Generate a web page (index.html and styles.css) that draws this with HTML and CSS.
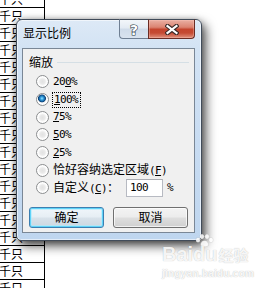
FILE: index.html
```html
<!DOCTYPE html>
<html lang="zh-CN">
<head>
<meta charset="utf-8">
<title>显示比例</title>
<link rel="stylesheet" href="styles.css">
</head>
<body>
<div class="sheet">
  <div class="cell">千只</div><div class="cell">千只</div><div class="cell">千只</div>
  <div class="cell">千只</div><div class="cell">千只</div><div class="cell">千只</div>
  <div class="cell">千只</div><div class="cell">千只</div><div class="cell">千只</div>
  <div class="cell">千只</div><div class="cell">千只</div><div class="cell">千只</div>
  <div class="cell">千只</div><div class="cell">千只</div><div class="cell">千只</div>
  <div class="cell">千只</div><div class="cell">千只</div><div class="cell">千只</div>
</div>

<div class="window">
  <div class="titlebar">
    <span class="title">显示比例</span>
    <div class="caption-buttons">
      <div class="cap help"><span class="help-glyph">?</span></div>
      <div class="cap close">
        <svg width="14" height="11" viewBox="0 0 14 11">
          <path d="M2.5 2 L11.5 9 M11.5 2 L2.5 9" stroke="#3b2a28" stroke-width="4.4" stroke-linecap="square" fill="none"/>
          <path d="M2.5 2 L11.5 9 M11.5 2 L2.5 9" stroke="#ffffff" stroke-width="2.2" stroke-linecap="square" fill="none"/>
        </svg>
      </div>
    </div>
  </div>
  <div class="client">
    <div class="group-head"><span>缩放</span><div class="rule"></div></div>
    <div class="options">
      <div class="opt"><span class="radio"></span><span class="lbl lat">20<u>0</u>%</span></div>
      <div class="opt"><span class="radio checked"></span><span class="lbl lat focus"><u>1</u>00%</span></div>
      <div class="opt"><span class="radio"></span><span class="lbl lat"><u>7</u>5%</span></div>
      <div class="opt"><span class="radio"></span><span class="lbl lat"><u>5</u>0%</span></div>
      <div class="opt"><span class="radio"></span><span class="lbl lat"><u>2</u>5%</span></div>
      <div class="opt"><span class="radio"></span><span class="lbl">恰好容纳选定区域<span class="lat">(<u>F</u>)</span></span></div>
      <div class="opt"><span class="radio"></span><span class="lbl custom">自定义<span class="lat">(<u>C</u>)</span>：</span><span class="field lat">100</span><span class="pct lat">%</span></div>
    </div>
    <div class="buttons">
      <div class="btn default">确定</div>
      <div class="btn">取消</div>
    </div>
  </div>
</div>

<div class="watermark">
  <svg class="paw" width="19" height="13" viewBox="0 0 19 13">
    <ellipse cx="3" cy="6" rx="2.2" ry="2.6"/>
    <ellipse cx="7" cy="2.6" rx="2.2" ry="2.5"/>
    <ellipse cx="12" cy="2.6" rx="2.2" ry="2.5"/>
    <ellipse cx="16" cy="6" rx="2.2" ry="2.6"/>
    <path d="M9.5 6.5 C6 6.5 4.5 11 6.5 12.2 C8 13 11 13 12.5 12.2 C14.5 11 13 6.5 9.5 6.5 Z"/>
  </svg>
  <div class="wm-line"><span class="wm-baidu">Baidu</span><span class="wm-jy">经验</span></div>
  <div class="wm-url">jingyan.baidu.com</div>
</div>
</body>
</html>
```

FILE: styles.css
```css
html, body {
  margin: 0;
  padding: 0;
}

body {
  width: 279px;
  height: 288px;
  overflow: hidden;
  position: relative;
  background: #ffffff;
  font-family: "Noto Sans CJK SC", sans-serif;
  font-size: 12px;
  color: #000;
}

/* background spreadsheet column */
.sheet {
  width: 44px;
  height: 300px;
  margin-top: -9px;
  border-right: 1px solid #000;
}

.cell {
  height: 16px;
  line-height: 16px;
  border-bottom: 1px solid #000;
  white-space: nowrap;
  overflow: hidden;
  text-indent: -1px;
}

/* dialog window */
.window {
  position: absolute;
  left: 16px;
  top: 19px;
  width: 186px;
  height: 222px;
  box-sizing: border-box;
  border: 1px solid #414c5a;
  border-radius: 6px 6px 5px 5px;
  padding: 0 6px 7px 5px;
  display: flex;
  flex-direction: column;
  background: linear-gradient(180deg, #dde9f6 0, #d3e3f4 28px, #c8dcf2 55%, #bfd6ef 100%);
  box-shadow: inset 0 0 0 1px rgba(255, 255, 255, 0.55), 4px 5px 11px rgba(0, 0, 0, 0.65), -1px 1px 6px rgba(0, 0, 0, 0.35);
}

.titlebar {
  height: 29px;
  margin-top: -1px;
  display: flex;
  justify-content: space-between;
  align-items: flex-start;
  flex: none;
}

.title {
  padding-top: 6px;
  padding-left: 1px;
  line-height: 16px;
  font-size: 12px;
  color: #000;
}

.caption-buttons {
  display: flex;
  height: 20px;
}

.cap {
  box-sizing: border-box;
  height: 20px;
  display: flex;
  align-items: center;
  justify-content: center;
}

.help {
  width: 29px;
  border: 1px solid #6f7f93;
  border-top-color: #414c5a;
  border-right: none;
  border-radius: 0 0 0 4px;
  background: linear-gradient(180deg, #f3f6fa 0, #e3eaf3 45%, #cfdbe9 50%, #d9e3ef 100%);
}

.help-glyph {
  font-family: "DejaVu Sans", sans-serif;
  font-weight: bold;
  font-size: 14px;
  line-height: 14px;
  color: #ffffff;
  -webkit-text-stroke: 1.2px #2f3a48;
  paint-order: stroke fill;
  margin-top: 1px;
}

.close {
  width: 47px;
  border: 1px solid #6a2c24;
  border-top-color: #414c5a;
  border-radius: 0 0 4px 0;
  background: linear-gradient(180deg, #eab0a3 0, #db8472 40%, #c4452e 52%, #c54a33 72%, #e0927e 100%);
  box-shadow: inset 0 0 0 1px rgba(255, 200, 190, 0.35);
}

.close svg {
  display: block;
}

/* client area */
.client {
  height: 185px;
  box-sizing: border-box;
  border: 1px solid #7a8796;
  background: #f0f0f0;
  flex: none;
}

.group-head {
  margin-top: 6px;
  padding-left: 6px;
  padding-right: 5px;
  height: 14px;
  display: flex;
  align-items: center;
  line-height: 14px;
}

.rule {
  flex: 1;
  height: 1px;
  margin-left: 4px;
  background: #d5dfe5;
}

.options {
  margin-top: 4px;
  padding-left: 13px;
  display: grid;
  grid-auto-rows: 17.7px;
}

.opt {
  display: flex;
  align-items: center;
  white-space: nowrap;
}

.radio {
  width: 13px;
  height: 13px;
  box-sizing: border-box;
  border-radius: 50%;
  border: 1px solid #8c8e90;
  margin-right: 4px;
  flex: none;
  background: radial-gradient(circle at 50% 50%, #e2e2e2 0, #e9e9e9 2.5px, #f4f4f4 3.5px, #ffffff 4.5px, #fdfdfd 5.5px);
}

.radio.checked {
  background:
    radial-gradient(circle at 45% 40%, #9fe6ff 0, #3aa7e6 1.4px, #135f9e 3px, #0d3f73 3.6px, rgba(150, 170, 190, 0.9) 4px, transparent 4.4px),
    radial-gradient(circle at 50% 50%, #e2e2e2 0, #f4f4f4 3.5px, #ffffff 4.5px, #fdfdfd 5.5px);
}

.lbl {
  line-height: 14px;
  font-size: 12px;
}

.lat {
  font-family: "DejaVu Sans Mono", monospace;
  font-size: 11px;
  letter-spacing: -0.6px;
}

u {
  text-decoration: underline;
  text-underline-offset: 1px;
}

.focus {
  border: 1px dotted #000;
  padding: 0 2px 0 1px;
  margin-left: -1px;
}

.custom {
  display: inline-block;
  width: 73px;
}

.field {
  box-sizing: border-box;
  width: 37px;
  height: 18px;
  line-height: 16px;
  border: 1px solid #b7bac2;
  border-top-color: #abadb3;
  background: #ffffff;
  padding-left: 3px;
}

.pct {
  margin-left: 4px;
}

.buttons {
  margin-top: 10px;
  padding-left: 6px;
  display: flex;
  gap: 9px;
}

.btn {
  width: 75px;
  height: 21px;
  box-sizing: border-box;
  border: 1px solid #707070;
  border-radius: 3px;
  display: flex;
  align-items: center;
  justify-content: center;
  font-size: 12px;
  line-height: 14px;
  background: linear-gradient(180deg, #f3f3f3 0, #ececec 48%, #dedede 52%, #d0d0d0 100%);
  box-shadow: inset 0 0 0 1px rgba(255, 255, 255, 0.7);
}

.btn.default {
  border-color: #3c7fb1;
  box-shadow: inset 0 0 0 1px #5fd3f8, inset 0 0 0 2px rgba(170, 235, 255, 0.6);
  background: linear-gradient(180deg, #f0f6fa 0, #e6eef4 48%, #d8e2ea 52%, #ccd7e0 100%);
}

/* watermark */
.watermark {
  position: absolute;
  left: 162px;
  top: 234px;
  width: 117px;
  color: rgba(255, 255, 255, 0.9);
  text-shadow: 0 0 1px rgba(0, 0, 0, 0.3);
  pointer-events: none;
}

.paw {
  display: block;
  margin-left: 33px;
  fill: rgba(255, 255, 255, 0.85);
  stroke: rgba(0, 0, 0, 0.12);
  stroke-width: 0.6;
}

.wm-line {
  display: flex;
  align-items: baseline;
  margin-top: -3px;
  line-height: 20px;
}

.wm-baidu {
  font-family: "Liberation Sans", sans-serif;
  font-weight: bold;
  font-size: 20px;
}

.wm-jy {
  font-family: "Noto Sans CJK SC", sans-serif;
  font-weight: bold;
  font-size: 15px;
  margin-left: 1px;
}

.wm-url {
  font-family: "Liberation Sans", sans-serif;
  font-weight: bold;
  font-size: 10.5px;
  line-height: 12px;
  margin-top: 2px;
}
```
